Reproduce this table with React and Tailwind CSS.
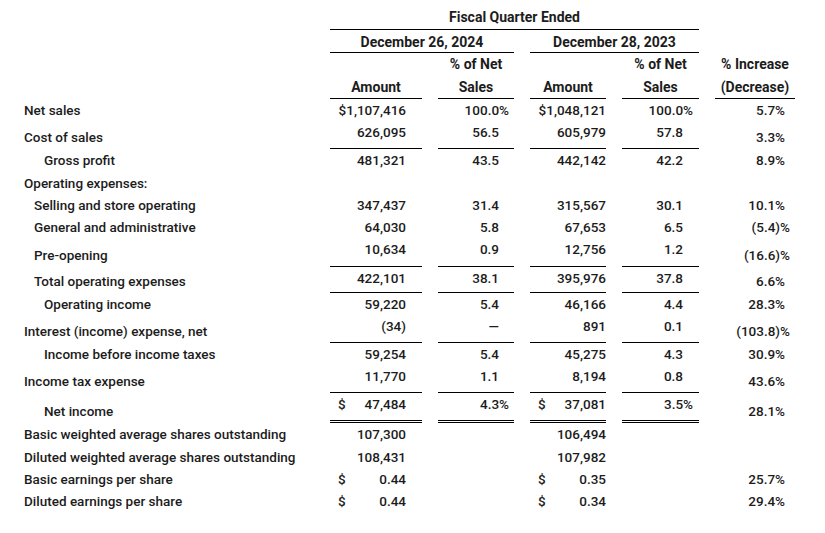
import React from "react";

// column right paddings: [plain number, value ending in %]
const PAD = [
  ["pr-4", "pr-4"],
  ["pr-[15px]", "pr-[5px]"],
  ["pr-0", "pr-0"],
  ["pr-4", "pr-[6px]"],
];

const GRID = "grid grid-cols-[290px_92px_76px_76px_77px_80px] gap-x-4";

const rows = [
  { label: "Net sales", h: "h-[22px]", v: ["$1,107,416", "100.0%", "$1,048,121", "100.0%"], inc: "5.7%" },
  { label: "Cost of sales", h: "h-[28px]", line: true, v: ["626,095", "56.5", "605,979", "57.8"], inc: "3.3%" },
  { label: "Gross profit", indent: 2, h: "h-[22px]", v: ["481,321", "43.5", "442,142", "42.2"], inc: "8.9%" },
  { label: "Operating expenses:", h: "h-[23px]", v: [], inc: "" },
  { label: "Selling and store operating", indent: 1, h: "h-[22px]", v: ["347,437", "31.4", "315,567", "30.1"], inc: "10.1%" },
  { label: "General and administrative", indent: 1, h: "h-[22px]", v: ["64,030", "5.8", "67,653", "6.5"], inc: "(5.4)%" },
  { label: "Pre-opening", indent: 1, h: "h-[29px]", line: true, v: ["10,634", "0.9", "12,756", "1.2"], inc: "(16.6)%" },
  { label: "Total operating expenses", indent: 1, h: "h-[26px]", line: true, v: ["422,101", "38.1", "395,976", "37.8"], inc: "6.6%" },
  { label: "Operating income", indent: 2, h: "h-[22px]", v: ["59,220", "5.4", "46,166", "4.4"], inc: "28.3%" },
  { label: "Interest (income) expense, net", h: "h-[28px]", line: true, v: ["(34)", "—", "891", "0.1"], inc: "(103.8)%" },
  { label: "Income before income taxes", indent: 2, h: "h-[22px]", v: ["59,254", "5.4", "45,275", "4.3"], inc: "30.9%" },
  { label: "Income tax expense", h: "h-[28px]", line: true, v: ["11,770", "1.1", "8,194", "0.8"], inc: "43.6%" },
  { label: "Net income", indent: 2, h: "h-[30px]", double: true, v: [{ d: "47,484" }, "4.3%", { d: "37,081" }, "3.5%"], inc: "28.1%" },
  { label: "Basic weighted average shares outstanding", h: "h-[22px]", v: ["107,300", "", "106,494", ""], inc: "" },
  { label: "Diluted weighted average shares outstanding", h: "h-[23px]", top: "pt-[4px]", v: ["108,431", "", "107,982", ""], inc: "" },
  { label: "Basic earnings per share", h: "h-[22px]", v: [{ d: "0.44" }, "", { d: "0.35" }, ""], inc: "25.7%" },
  { label: "Diluted earnings per share", h: "h-[22px]", v: [{ d: "0.44" }, "", { d: "0.34" }, ""], inc: "29.4%" },
];

const INDENT = ["pl-0", "pl-[10px]", "pl-5"];

function NumCell({ value, col, row }) {
  const border = row.double
    ? "border-b-[3px] border-double border-black"
    : row.line
    ? "border-b border-black"
    : "";
  const top = row.top || "pt-[3px]";
  if (value && typeof value === "object") {
    return (
      <div className={`${border} ${top} ${PAD[col][0]} pl-2 flex justify-between`}>
        <span>$</span>
        <span>{value.d}</span>
      </div>
    );
  }
  const pct = typeof value === "string" && value.endsWith("%");
  return (
    <div className={`${border} ${top} ${pct ? PAD[col][1] : PAD[col][0]} text-right`}>{value}</div>
  );
}

function DataRow({ row }) {
  const bottom = row.line || row.double ? "pb-1" : "pb-[3px]";
  const neg = row.inc.includes(")");
  return (
    <div className={`${GRID} ${row.h}`}>
      <div className={`self-end ${bottom} ${INDENT[row.indent || 0]} whitespace-nowrap`}>{row.label}</div>
      {[0, 1, 2, 3].map((c) => (
        <NumCell key={c} value={row.v[c] || ""} col={c} row={row} />
      ))}
      <div className={`self-end ${bottom} text-right ${neg ? "pr-[5px]" : "pr-[10px]"}`}>{row.inc}</div>
    </div>
  );
}

export default function App() {
  return (
    <div className="min-h-screen bg-white pl-6 text-[13.5px] leading-4 font-medium text-[#1c1c1c] font-['Roboto',sans-serif]">
      <div className="font-bold text-[14px]">
        <div className={`${GRID} h-[30px]`}>
          <div />
          <div className="col-span-4 border-b border-black self-stretch flex items-end justify-center pb-1">
            Fiscal Quarter Ended
          </div>
        </div>
        <div className={`${GRID} h-[23px]`}>
          <div />
          <div className="col-span-2 border-b border-black pt-[4px] text-center">December 26, 2024</div>
          <div className="col-span-2 border-b border-black pt-[4px] text-center">December 28, 2023</div>
        </div>
        <div className={`${GRID} h-[22px]`}>
          <div />
          <div />
          <div className="pt-[3px] text-center">% of Net</div>
          <div />
          <div className="pt-[3px] text-center">% of Net</div>
          <div className="pt-[3px] text-center">% Increase</div>
        </div>
        <div className={`${GRID} h-[24px]`}>
          <div />
          <div className="border-b border-black pt-[4px] text-center">Amount</div>
          <div className="border-b border-black pt-[4px] text-center">Sales</div>
          <div className="border-b border-black pt-[4px] text-center">Amount</div>
          <div className="border-b border-black pt-[4px] text-center">Sales</div>
          <div className="border-b border-black pt-[4px] text-center">(Decrease)</div>
        </div>
      </div>
      {rows.map((r, i) => (
        <DataRow key={i} row={r} />
      ))}
    </div>
  );
}
